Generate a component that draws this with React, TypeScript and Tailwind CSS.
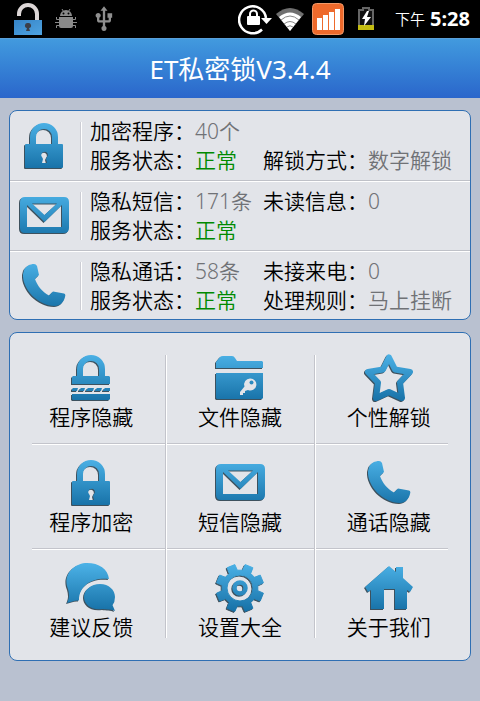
import React from 'react'
import { MdUsb } from 'react-icons/md'

type Field = { label: string, value: string, ok?: boolean }

type StatusRow = {
  id: string
  icon: React.ReactNode
  fields: (Field | null)[]
}

type Tile = { label: string, icon: React.ReactNode }

// shared fill for every blue icon, lit from the top
function IconDefs(){
  return (
    <svg className="absolute size-0" aria-hidden="true">
      <defs>
        <linearGradient id="blue" gradientUnits="userSpaceOnUse" x1="0" y1="0" x2="0" y2="48">
          <stop offset="0" stopColor="#4bb1e6" />
          <stop offset="1" stopColor="#1670a6" />
        </linearGradient>
      </defs>
    </svg>
  )
}

function Icon({ children }: { children: React.ReactNode }){
  return (
    <svg viewBox="0 0 48 48" className="size-12 shrink-0 overflow-visible drop-shadow-[-1px_1px_0_#17303fd0]" fill="url(#blue)" fillRule="evenodd" aria-hidden="true">
      {children}
    </svg>
  )
}

const LockIcon = () => (
  <Icon>
    <path d="M10 23V15a14 14 0 0 1 28 0V23H32V15a8 8 0 0 0-16 0V23Z" />
    <path d="M6 22H42Q43 22 43 23V45Q43 46 42 46H6Q5 46 5 45V23Q5 22 6 22ZM24 30a3 3 0 0 0-2 5l1 2-1 4h5l-1-4 1-2a3 3 0 0 0-3-5Z" />
  </Icon>
)

const HiddenLockIcon = () => (
  <Icon>
    <path d="M10 23V15a14 14 0 0 1 28 0V22H42L43 23V30H5V23L6 22H10ZM16 22H32V15a8 8 0 0 0-16 0Z" />
    <path d="M6 34H11L10 37H5V35ZM14 34H18L17 37H12V36ZM21 34H27L26 37H19V36ZM30 34H35L34 37H28V36ZM38 34H43V37H36V36Z" />
    <path d="M5 40H43V45L42 46H6L5 45Z" />
  </Icon>
)

const FolderIcon = () => (
  <Icon>
    <path d="M0 14V8L4 3Q5 2 7 2H16Q18 2 19 4L21 7H46L47 8V14Z" />
    <path d="M0 19H47V44L46 45H1L0 44Z" />
    <path d="M34 24.500a6 6 0 0 0-5.500 8L24 38V41H27V39H29V37L32 36a6 6 0 1 0 2-11.500Z" fill="#e2e4e9" />
    <circle cx="35.500" cy="28.500" r="2" />
  </Icon>
)

const StarIcon = () => (
  <Icon>
    <path d="M24 3.500 30 15.500 45 18 35 28.500 37 44 24 38 11 44 13 28.500 3 18 18 15.500Z" fill="none" stroke="url(#blue)" strokeWidth="6" strokeLinejoin="round" />
  </Icon>
)

const MailIcon = () => (
  <Icon>
    <path d="M5 5H44Q49 5 49 10V36Q49 41 44 41H5Q0 41 0 36V10Q0 5 5 5ZM7 13V35H42V13L24.500 30ZM12 11.500 24.500 23 37 11.500Z" />
  </Icon>
)

const PhoneIcon = () => (
  <Icon>
    <path d="M4 8C6 4 10 2 14 2Q16 2 17 4L19 13 15 17C17 23 22 30 29 33.500L33 29.500 44 31.500Q46 32 45 35C44 40 40 44 35 44C18 44 2 27 3 12Z" />
  </Icon>
)

const ChatIcon = () => (
  <Icon>
    <path d="M0 39C3 33 2 29 1 25C-5 11 7-1 20-1C32-1 41 5 42 15C26 13 12 21 12 36.500C8 36 4 38 0 39Z" />
    <path d="M33 20C42 20 48 26 48 33Q48 38 45.500 41L48 47C45 45 40 46 36 45C24 47 17 40 17 33C17 26 24 20 33 20Z" />
  </Icon>
)

function gearPath(){
  const points: string[] = []
  for (let i = 0; i < 8; i++) {
    const mid = 22.5 + i * 45
    const corners = [[-14, 18], [-10, 24], [10, 24], [14, 18]]
    corners.forEach(([turn, radius]) => {
      const a = ((mid + turn) * Math.PI) / 180
      points.push(`${(24 + radius * Math.cos(a)).toFixed(2)} ${(24 + radius * Math.sin(a)).toFixed(2)}`)
    })
  }
  return `M${points.join('L')}ZM11 24a13 13 0 1 0 26 0 13 13 0 1 0-26 0Z`
}

const GearIcon = () => (
  <Icon>
    <path d={gearPath()} stroke="url(#blue)" strokeLinejoin="round" />
    <circle cx="24" cy="24" r="5.500" fill="none" stroke="url(#blue)" strokeWidth="4.500" />
  </Icon>
)

const HomeIcon = () => (
  <Icon>
    <path d="M24 2 31 8V3H38V14L48 23 45 28 42 26V45H30V25H19V45H6V26L3 28 0 23Z" />
  </Icon>
)

const STATUS: StatusRow[] = [
  {
    id: 'apps',
    icon: <LockIcon />,
    fields: [
      { label: '加密程序', value: '40个' },
      null,
      { label: '服务状态', value: '正常', ok: true },
      { label: '解锁方式', value: '数字解锁' },
    ],
  },
  {
    id: 'sms',
    icon: <MailIcon />,
    fields: [
      { label: '隐私短信', value: '171条' },
      { label: '未读信息', value: '0' },
      { label: '服务状态', value: '正常', ok: true },
      null,
    ],
  },
  {
    id: 'calls',
    icon: <PhoneIcon />,
    fields: [
      { label: '隐私通话', value: '58条' },
      { label: '未接来电', value: '0' },
      { label: '服务状态', value: '正常', ok: true },
      { label: '处理规则', value: '马上挂断' },
    ],
  },
]

const TILES: Tile[] = [
  { label: '程序隐藏', icon: <HiddenLockIcon /> },
  { label: '文件隐藏', icon: <FolderIcon /> },
  { label: '个性解锁', icon: <StarIcon /> },
  { label: '程序加密', icon: <LockIcon /> },
  { label: '短信隐藏', icon: <MailIcon /> },
  { label: '通话隐藏', icon: <PhoneIcon /> },
  { label: '建议反馈', icon: <ChatIcon /> },
  { label: '设置大全', icon: <GearIcon /> },
  { label: '关于我们', icon: <HomeIcon /> },
]

function StatusBar(){
  return (
    <div className="flex h-[38px] items-center justify-between bg-black pr-[10px] pl-[14px] text-white">
      <div className="flex items-center">
        <svg viewBox="0 0 28 32" className="h-8 w-7" aria-hidden="true">
          <defs>
            <linearGradient id="padlock" x1="0" y1="0" x2="1" y2="1">
              <stop offset="0" stopColor="#3584c8" />
              <stop offset="1" stopColor="#4fa3e0" />
            </linearGradient>
          </defs>
          <path d="M5 13V11a9 9 0 0 1 18 0V18" fill="none" stroke="#dcd6d6" strokeWidth="4" />
          <rect y="17" width="28" height="15" fill="url(#padlock)" />
          <path d="M14 20a2.500 2.500 0 0 0-1 5l-1 3h4l-1-3a2.500 2.500 0 0 0-1-5Z" fill="#3b3f4a" />
        </svg>
        <svg viewBox="0 0 22 22" className="ml-[13px] size-[22px]" fill="#8a8a8a" aria-hidden="true">
          <path d="M5 8a6 6 0 0 1 12 0Z" />
          <path d="M7 1 8.500 3.500M15 1 13.500 3.500" stroke="#8a8a8a" />
          <circle cx="8.500" cy="5.500" r="1" fill="#000" />
          <circle cx="13.500" cy="5.500" r="1" fill="#000" />
          <path d="M4 9H18V18Q18 20 16 20H6Q4 20 4 18Z" />
          <path d="M4 11.500H1.500V9M4 14.500H0M4 17.500H1.500V20M18 11.500H20.500V9M18 14.500H22M18 17.500H20.500V20" fill="none" stroke="#8a8a8a" />
        </svg>
        <MdUsb className="ml-[13px] size-7 text-[#8f8f8f]" aria-hidden="true" />
      </div>
      <div className="flex items-center">
        <svg viewBox="0 0 34 32" className="h-8 w-[34px]" fill="#fff" aria-hidden="true">
          <path d="M24 26.500A13.500 13.500 0 1 1 28 15" fill="none" stroke="#fff" strokeWidth="2.500" />
          <path d="M23 15H34L28.500 21Z" />
          <rect x="9" y="13" width="13" height="9" rx="1" />
          <path d="M12 14V11a3.500 3.500 0 0 1 7 0V14" fill="none" stroke="#fff" strokeWidth="2" />
        </svg>
        <svg viewBox="0 0 28 24" className="ml-1 h-6 w-7" aria-hidden="true">
          <path d="M14 24 0 7Q14-5 28 7Z" fill="#6f6f6f" />
          <path d="M14 24 3 10Q14 1 25 10Z" fill="#fff" />
          <path d="M5 13Q14 5 23 13M8 17Q14 12 20 17M11 20Q14 17.500 17 20" fill="none" stroke="#888" />
        </svg>
        <svg viewBox="0 0 32 32" className="ml-2 size-8" aria-hidden="true">
          <rect x=".5" y=".5" width="31" height="31" rx="4" fill="#ee6a2c" stroke="#f29a68" />
          <path d="M5 15H10V27H5ZM11 12H16V27H11ZM17 9H22V27H17ZM23 6H28V27H23Z" fill="#fff" />
        </svg>
        <svg viewBox="0 0 18 24" className="ml-[13px] h-6 w-[18px]" aria-hidden="true">
          <path d="M6 1H12V3H16V22H2V3H6Z" fill="#111" stroke="#666" strokeWidth="2" />
          <rect x="1" y="18" width="16" height="5" fill="#c4bd12" />
          <path d="M10 4 5 12H8L7 19 14 10H10L12 4Z" fill="#fff" />
        </svg>
        <span className="ml-5 text-[15px] leading-6 font-[350]">下午</span>
        <span className="ml-[5px] text-xl leading-6 font-bold">5:28</span>
      </div>
    </div>
  )
}

function StatusItem({ row }: { row: StatusRow }){
  return (
    <li className="flex h-[70px] items-center border-b border-[#bfc1c8] shadow-[0_1px_0_#ffffff] last:h-[68px] last:border-b-0 last:pt-[2px] last:shadow-none">
      <div className="flex w-[70px] justify-center pr-[2px]">{row.icon}</div>
      <div className="h-12 border-r border-l border-r-white border-l-[#cccdd4]" />
      <dl className="ml-2 grid flex-1 grid-cols-[173px_1fr] text-[21px] leading-[29px] font-[350]">
        {row.fields.map((f, i) => f ? (
          <div key={i} className="flex whitespace-nowrap">
            <dt>{f.label}：</dt>
            <dd className={f.ok ? 'text-[#008a00]' : 'text-[#707276]'}>{f.value}</dd>
          </div>
        ) : <div key={i} />)}
      </dl>
    </li>
  )
}

// etched lines between the tiles, drawn over the grid
function GridLines(){
  return (
    <div className="pointer-events-none absolute inset-0" aria-hidden="true">
      <div className="absolute inset-x-[22px] top-[110px] h-[2px] border-t border-[#c3c4cb] bg-white" />
      <div className="absolute inset-x-[22px] top-[215px] h-[2px] border-t border-[#c3c4cb] bg-white" />
      <div className="absolute inset-y-[22px] left-1/3 ml-[2px] w-[2px] border-l border-[#c3c4cb] bg-white" />
      <div className="absolute inset-y-[22px] right-1/3 mr-[1px] w-[2px] border-l border-[#c3c4cb] bg-white" />
    </div>
  )
}

export default function App(){
  return (
    <div lang="zh-CN" className="min-h-screen bg-[#b9c1d0] font-['Noto_Sans','Noto_Sans_CJK_SC',sans-serif] text-black">
      <IconDefs />
      <StatusBar />
      <header className="flex h-[60px] items-center justify-center border-t border-[#5a9fd8] bg-linear-to-b from-[#429ade] to-[#2b66cb]">
        <h1 className="text-[26px] leading-9 text-white">ET私密锁V3.4.4</h1>
      </header>
      <main className="flex flex-col gap-3 px-[9px] py-3">
        <ul className="rounded-lg border border-[#2f6fb3] bg-[#e2e4e9]">
          {STATUS.map(row => <StatusItem key={row.id} row={row} />)}
        </ul>
        <nav className="relative rounded-lg border border-[#2f6fb3] bg-[#e2e4e9] px-[7px] py-[6px]">
          <GridLines />
          <div className="grid grid-cols-3">
            {TILES.map(t => (
              <button key={t.label} type="button" className="flex h-[105px] flex-col items-center pt-[15px] text-[21px] leading-[30px] font-[350]">
                {t.icon}
                <span>{t.label}</span>
              </button>
            ))}
          </div>
        </nav>
      </main>
    </div>
  )
}
